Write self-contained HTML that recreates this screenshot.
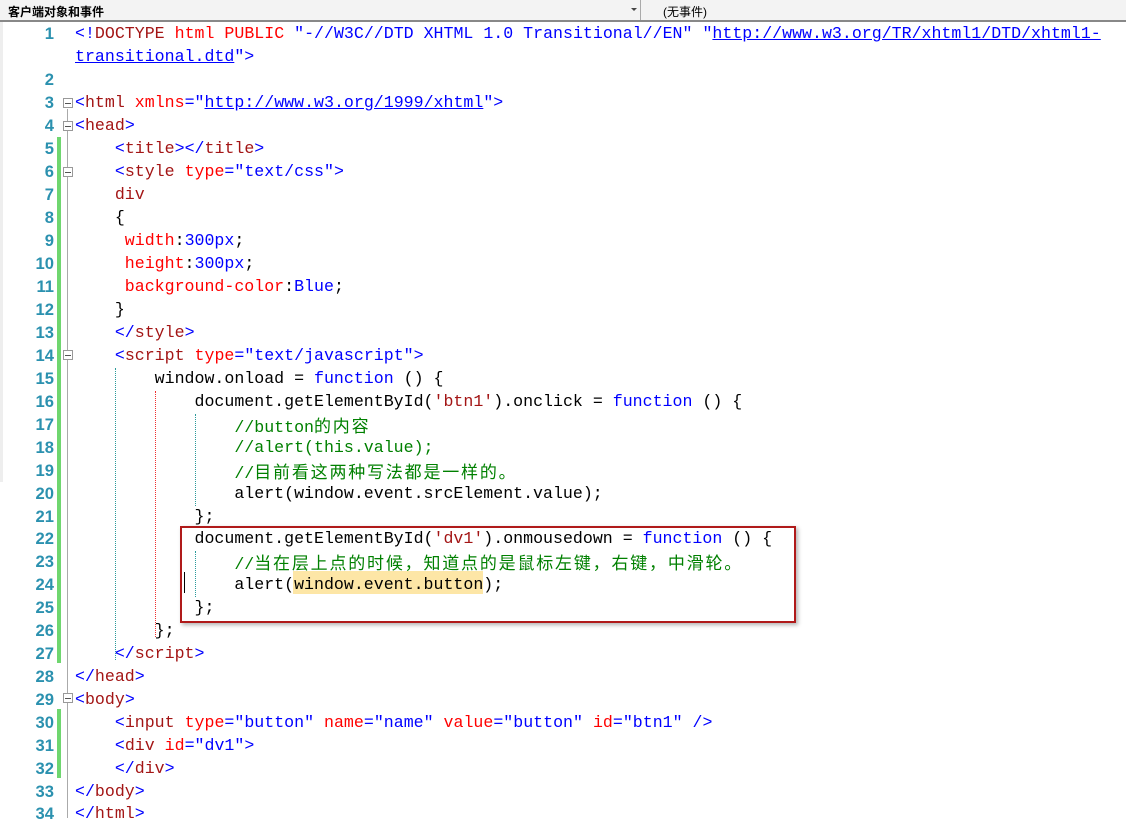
<!DOCTYPE html>
<html><head><meta charset="utf-8"><style>
body{margin:0;width:1126px;height:831px;background:#fff;position:relative;overflow:hidden;font-family:"Liberation Mono",monospace;}
.hdr{position:absolute;left:0;top:0;width:1126px;height:20px;background:#f3f3f3;border-bottom:2px solid #888;font-family:"Liberation Sans","Noto Sans CJK SC",sans-serif;font-size:12px;}
.ln{position:absolute;left:0;width:54px;text-align:right;color:#2b91af;font-size:16.6px;font-weight:bold;font-family:"Liberation Sans",sans-serif;line-height:23px;}
.c{position:absolute;left:75px;white-space:pre;font-size:16.6px;line-height:23px;color:#000;}
.b{color:#0000ff}.m{color:#a31515}.r{color:#ff0000}.g{color:#008000}.u{color:#0000ff;text-decoration:underline}
.k{font-family:"Noto Sans CJK SC",sans-serif;font-size:17px;letter-spacing:1.8px}
.bar{position:absolute;left:57px;width:4px;background:#6fd66f}
.fold{position:absolute;left:63px;width:8px;height:8px;border:1px solid #999;background:#fff}
.fold:after{content:"";position:absolute;left:1px;top:3.5px;width:6px;height:1px;background:#555}
.vl{position:absolute;left:67px;width:1px;background:#aaa}
.dg{position:absolute;width:0;border-left:1px dotted #2b9a9a}
.dr{position:absolute;width:0;border-left:1px dotted #f03030}
</style></head><body>
<div class="hdr"><span style="position:absolute;left:8px;top:3px;font-weight:bold">客户端对象和事件</span>
<span style="position:absolute;left:631px;top:8px;border-left:3px solid transparent;border-right:3px solid transparent;border-top:3px solid #444"></span>
<span style="position:absolute;left:640px;top:0;width:1px;height:20px;background:#aaa"></span>
<span style="position:absolute;left:663px;top:3px">(无事件)</span></div>
<div style="position:absolute;left:0;top:22px;width:3px;height:460px;background:#eee"></div>

<div class="bar" style="top:137px;height:526px"></div>
<div class="bar" style="top:709px;height:69px"></div>
<div class="vl" style="top:109px;height:709px"></div>
<div class="fold" style="top:98px"></div><div class="fold" style="top:121px"></div>
<div class="fold" style="top:167px"></div><div class="fold" style="top:350px"></div>
<div class="fold" style="top:693px"></div>
<div class="dg" style="left:115px;top:368px;height:292px"></div>
<div class="dr" style="left:155px;top:391px;height:246px"></div>
<div class="dg" style="left:195px;top:414px;height:92px"></div>
<div class="dg" style="left:195px;top:551px;height:46px"></div>

<div style="position:absolute;left:293px;top:571px;width:190px;height:23px;background:#fde6a6"></div>
<div style="position:absolute;left:184px;top:572px;width:1px;height:21px;background:#000"></div>
<div style="position:absolute;left:180px;top:526px;width:612px;height:93px;border:2px solid #b01a1a;box-shadow:2px 2px 4px rgba(0,0,0,.3)"></div>

<div class="ln" style="top:22px">1</div><div class="c" style="top:22px"><span class="b">&lt;!</span><span class="m">DOCTYPE</span> <span class="r">html</span> <span class="r">PUBLIC</span> <span class="b">"-//W3C//DTD XHTML 1.0 Transitional//EN"</span> <span class="b">"</span><span class="u">http://www.w3.org/TR/xhtml1/DTD/xhtml1-</span></div>
<div class="c" style="top:45px"><span class="u">transitional.dtd</span><span class="b">"&gt;</span></div>
<div class="ln" style="top:68px">2</div>
<div class="ln" style="top:91px">3</div><div class="c" style="top:91px"><span class="b">&lt;</span><span class="m">html</span> <span class="r">xmlns</span><span class="b">="</span><span class="u">http://www.w3.org/1999/xhtml</span><span class="b">"&gt;</span></div>
<div class="ln" style="top:114px">4</div><div class="c" style="top:114px"><span class="b">&lt;</span><span class="m">head</span><span class="b">&gt;</span></div>
<div class="ln" style="top:137px">5</div><div class="c" style="top:137px">    <span class="b">&lt;</span><span class="m">title</span><span class="b">&gt;&lt;/</span><span class="m">title</span><span class="b">&gt;</span></div>
<div class="ln" style="top:160px">6</div><div class="c" style="top:160px">    <span class="b">&lt;</span><span class="m">style</span> <span class="r">type</span><span class="b">="text/css"&gt;</span></div>
<div class="ln" style="top:183px">7</div><div class="c" style="top:183px">    <span class="m">div</span></div>
<div class="ln" style="top:206px">8</div><div class="c" style="top:206px">    {</div>
<div class="ln" style="top:229px">9</div><div class="c" style="top:229px">     <span class="r">width</span>:<span class="b">300px</span>;</div>
<div class="ln" style="top:252px">10</div><div class="c" style="top:252px">     <span class="r">height</span>:<span class="b">300px</span>;</div>
<div class="ln" style="top:275px">11</div><div class="c" style="top:275px">     <span class="r">background-color</span>:<span class="b">Blue</span>;</div>
<div class="ln" style="top:298px">12</div><div class="c" style="top:298px">    }</div>
<div class="ln" style="top:321px">13</div><div class="c" style="top:321px">    <span class="b">&lt;/</span><span class="m">style</span><span class="b">&gt;</span></div>
<div class="ln" style="top:344px">14</div><div class="c" style="top:344px">    <span class="b">&lt;</span><span class="m">script</span> <span class="r">type</span><span class="b">="text/javascript"&gt;</span></div>
<div class="ln" style="top:367px">15</div><div class="c" style="top:367px">        window.onload = <span class="b">function</span> () {</div>
<div class="ln" style="top:390px">16</div><div class="c" style="top:390px">            document.getElementById(<span class="m">'btn1'</span>).onclick = <span class="b">function</span> () {</div>
<div class="ln" style="top:413px">17</div><div class="c g" style="top:413px">                //button<span class="k">的内容</span></div>
<div class="ln" style="top:436px">18</div><div class="c g" style="top:436px">                //alert(this.value);</div>
<div class="ln" style="top:459px">19</div><div class="c g" style="top:459px">                //<span class="k">目前看这两种写法都是一样的。</span></div>
<div class="ln" style="top:482px">20</div><div class="c" style="top:482px">                alert(window.event.srcElement.value);</div>
<div class="ln" style="top:505px">21</div><div class="c" style="top:505px">            };</div>
<div class="ln" style="top:527px">22</div><div class="c" style="top:527px">            document.getElementById(<span class="m">'dv1'</span>).onmousedown = <span class="b">function</span> () {</div>
<div class="ln" style="top:550px">23</div><div class="c g" style="top:550px">                //<span class="k">当在层上点的时候，知道点的是鼠标左键，右键，中滑轮。</span></div>
<div class="ln" style="top:573px">24</div><div class="c" style="top:573px">                alert(window.event.button);</div>
<div class="ln" style="top:596px">25</div><div class="c" style="top:596px">            };</div>
<div class="ln" style="top:619px">26</div><div class="c" style="top:619px">        };</div>
<div class="ln" style="top:642px">27</div><div class="c" style="top:642px">    <span class="b">&lt;/</span><span class="m">script</span><span class="b">&gt;</span></div>
<div class="ln" style="top:665px">28</div><div class="c" style="top:665px"><span class="b">&lt;/</span><span class="m">head</span><span class="b">&gt;</span></div>
<div class="ln" style="top:688px">29</div><div class="c" style="top:688px"><span class="b">&lt;</span><span class="m">body</span><span class="b">&gt;</span></div>
<div class="ln" style="top:711px">30</div><div class="c" style="top:711px">    <span class="b">&lt;</span><span class="m">input</span> <span class="r">type</span><span class="b">="button"</span> <span class="r">name</span><span class="b">="name"</span> <span class="r">value</span><span class="b">="button"</span> <span class="r">id</span><span class="b">="btn1"</span> <span class="b">/&gt;</span></div>
<div class="ln" style="top:734px">31</div><div class="c" style="top:734px">    <span class="b">&lt;</span><span class="m">div</span> <span class="r">id</span><span class="b">="dv1"&gt;</span></div>
<div class="ln" style="top:757px">32</div><div class="c" style="top:757px">    <span class="b">&lt;/</span><span class="m">div</span><span class="b">&gt;</span></div>
<div class="ln" style="top:780px">33</div><div class="c" style="top:780px"><span class="b">&lt;/</span><span class="m">body</span><span class="b">&gt;</span></div>
<div class="ln" style="top:802px">34</div><div class="c" style="top:802px"><span class="b">&lt;/</span><span class="m">html</span><span class="b">&gt;</span></div>
</body></html>
